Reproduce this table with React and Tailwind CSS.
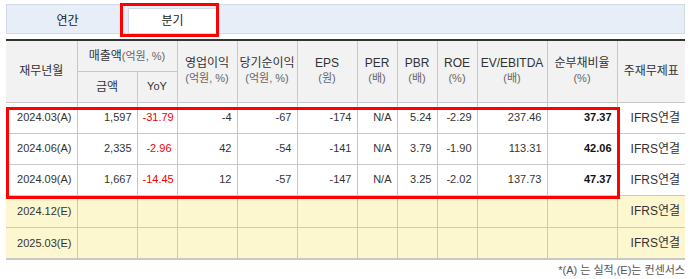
const rows = [
  { date: '2024.03(A)', sales: '1,597', yoy: '-31.79', op: '-4', net: '-67', eps: '-174', per: 'N/A', pbr: '5.24', roe: '-2.29', ev: '237.46', debt: '37.37' },
  { date: '2024.06(A)', sales: '2,335', yoy: '-2.96', op: '42', net: '-54', eps: '-141', per: 'N/A', pbr: '3.79', roe: '-1.90', ev: '113.31', debt: '42.06' },
  { date: '2024.09(A)', sales: '1,667', yoy: '-14.45', op: '12', net: '-57', eps: '-147', per: 'N/A', pbr: '3.25', roe: '-2.02', ev: '137.73', debt: '47.37' },
];

const estimates = ['2024.12(E)', '2025.03(E)'];

function HeadCell({ title, unit }) {
  return (
    <th rowSpan={2} className="border border-[#c8c8c8] font-normal leading-[15px]">
      <div className="text-[12px] text-[#333]">{title}</div>
      {unit && <div className="text-[11px] text-[#666]">{unit}</div>}
    </th>
  );
}

export default function App() {
  const td = 'border border-[#c8c8c8] px-[5px] text-right';
  return (
    <div className="relative w-[691px] h-[279px] bg-white font-['Liberation_Sans','Noto_Sans_CJK_KR',sans-serif] text-[#333]">
      {/* tabs */}
      <div className="absolute left-[6px] top-[4px] w-[679px] h-[30px] bg-[#e8eef8] border border-[#d3dae6] flex items-end">
        <div className="w-[121px] h-[24px] flex items-center justify-center text-[12px] text-[#222]">연간</div>
        <div className="w-[89px] h-[25px] bg-white border border-b-0 border-[#d3dae6] flex items-center justify-center text-[12px] text-[#222]">분기</div>
      </div>
      <div className="absolute left-[120px] top-[3px] w-[99px] h-[34px] border-[3px] border-[#f00]" />

      {/* table */}
      <div className="absolute left-[6px] top-[39px] w-[679px]">
        <table className="w-[679px] table-fixed border-collapse border-t-2 border-t-[#333] border-b-2 border-b-[#c8c8c8]">
          <colgroup>
            <col className="w-[71px]" />
            <col className="w-[60px]" />
            <col className="w-[40px]" />
            <col className="w-[60px]" />
            <col className="w-[60px]" />
            <col className="w-[60px]" />
            <col className="w-[40px]" />
            <col className="w-[40px]" />
            <col className="w-[40px]" />
            <col className="w-[70px]" />
            <col className="w-[70px]" />
            <col className="w-[68px]" />
          </colgroup>
          <thead className="bg-[#f2f2f2]">
            <tr className="h-[31px]">
              <th rowSpan={2} className="border border-[#c8c8c8] border-l-0 font-normal text-[12px]">재무년월</th>
              <th colSpan={2} className="border border-[#c8c8c8] font-normal text-[12px]">
                매출액<span className="text-[11px] text-[#666]">(억원, %)</span>
              </th>
              <HeadCell title="영업이익" unit="(억원, %)" />
              <HeadCell title="당기순이익" unit="(억원, %)" />
              <HeadCell title="EPS" unit="(원)" />
              <HeadCell title="PER" unit="(배)" />
              <HeadCell title="PBR" unit="(배)" />
              <HeadCell title="ROE" unit="(%)" />
              <HeadCell title="EV/EBITDA" unit="(배)" />
              <HeadCell title="순부채비율" unit="(%)" />
              <th rowSpan={2} className="border border-[#c8c8c8] border-r-0 font-normal text-[12px]">주재무제표</th>
            </tr>
            <tr className="h-[31px]">
              <th className="border border-[#c8c8c8] font-normal text-[12px]">금액</th>
              <th className="border border-[#c8c8c8] font-normal text-[11px]">YoY</th>
            </tr>
          </thead>
          <tbody className="text-[11px]">
            {rows.map((r) => (
              <tr key={r.date} className="h-[31px] bg-white">
                <td className={`${td} border-l-0 text-center`}>{r.date}</td>
                <td className={td}>{r.sales}</td>
                <td className={`${td} text-[#e00]`}>{r.yoy}</td>
                <td className={td}>{r.op}</td>
                <td className={td}>{r.net}</td>
                <td className={td}>{r.eps}</td>
                <td className={td}>{r.per}</td>
                <td className={td}>{r.pbr}</td>
                <td className={td}>{r.roe}</td>
                <td className={td}>{r.ev}</td>
                <td className={`${td} font-bold text-[#111]`}>{r.debt}</td>
                <td className={`${td} border-r-0 text-center text-[12px]`}>IFRS연결</td>
              </tr>
            ))}
            {estimates.map((d) => (
              <tr key={d} className="h-[32px] bg-[#fdf7cf]">
                <td className={`${td} border-l-0 text-center`}>{d}</td>
                {Array.from({ length: 10 }).map((_, i) => (
                  <td key={i} className={td}></td>
                ))}
                <td className={`${td} border-r-0 text-center text-[12px]`}>IFRS연결</td>
              </tr>
            ))}
          </tbody>
        </table>
        <div className="mt-[2px] text-right text-[11px] text-[#555]">*(A) 는 실적,(E)는 컨센서스</div>
      </div>

      {/* highlight */}
      <div className="absolute left-[6px] top-[107px] w-[614px] h-[92px] border-[3px] border-[#f00]" />
    </div>
  );
}
